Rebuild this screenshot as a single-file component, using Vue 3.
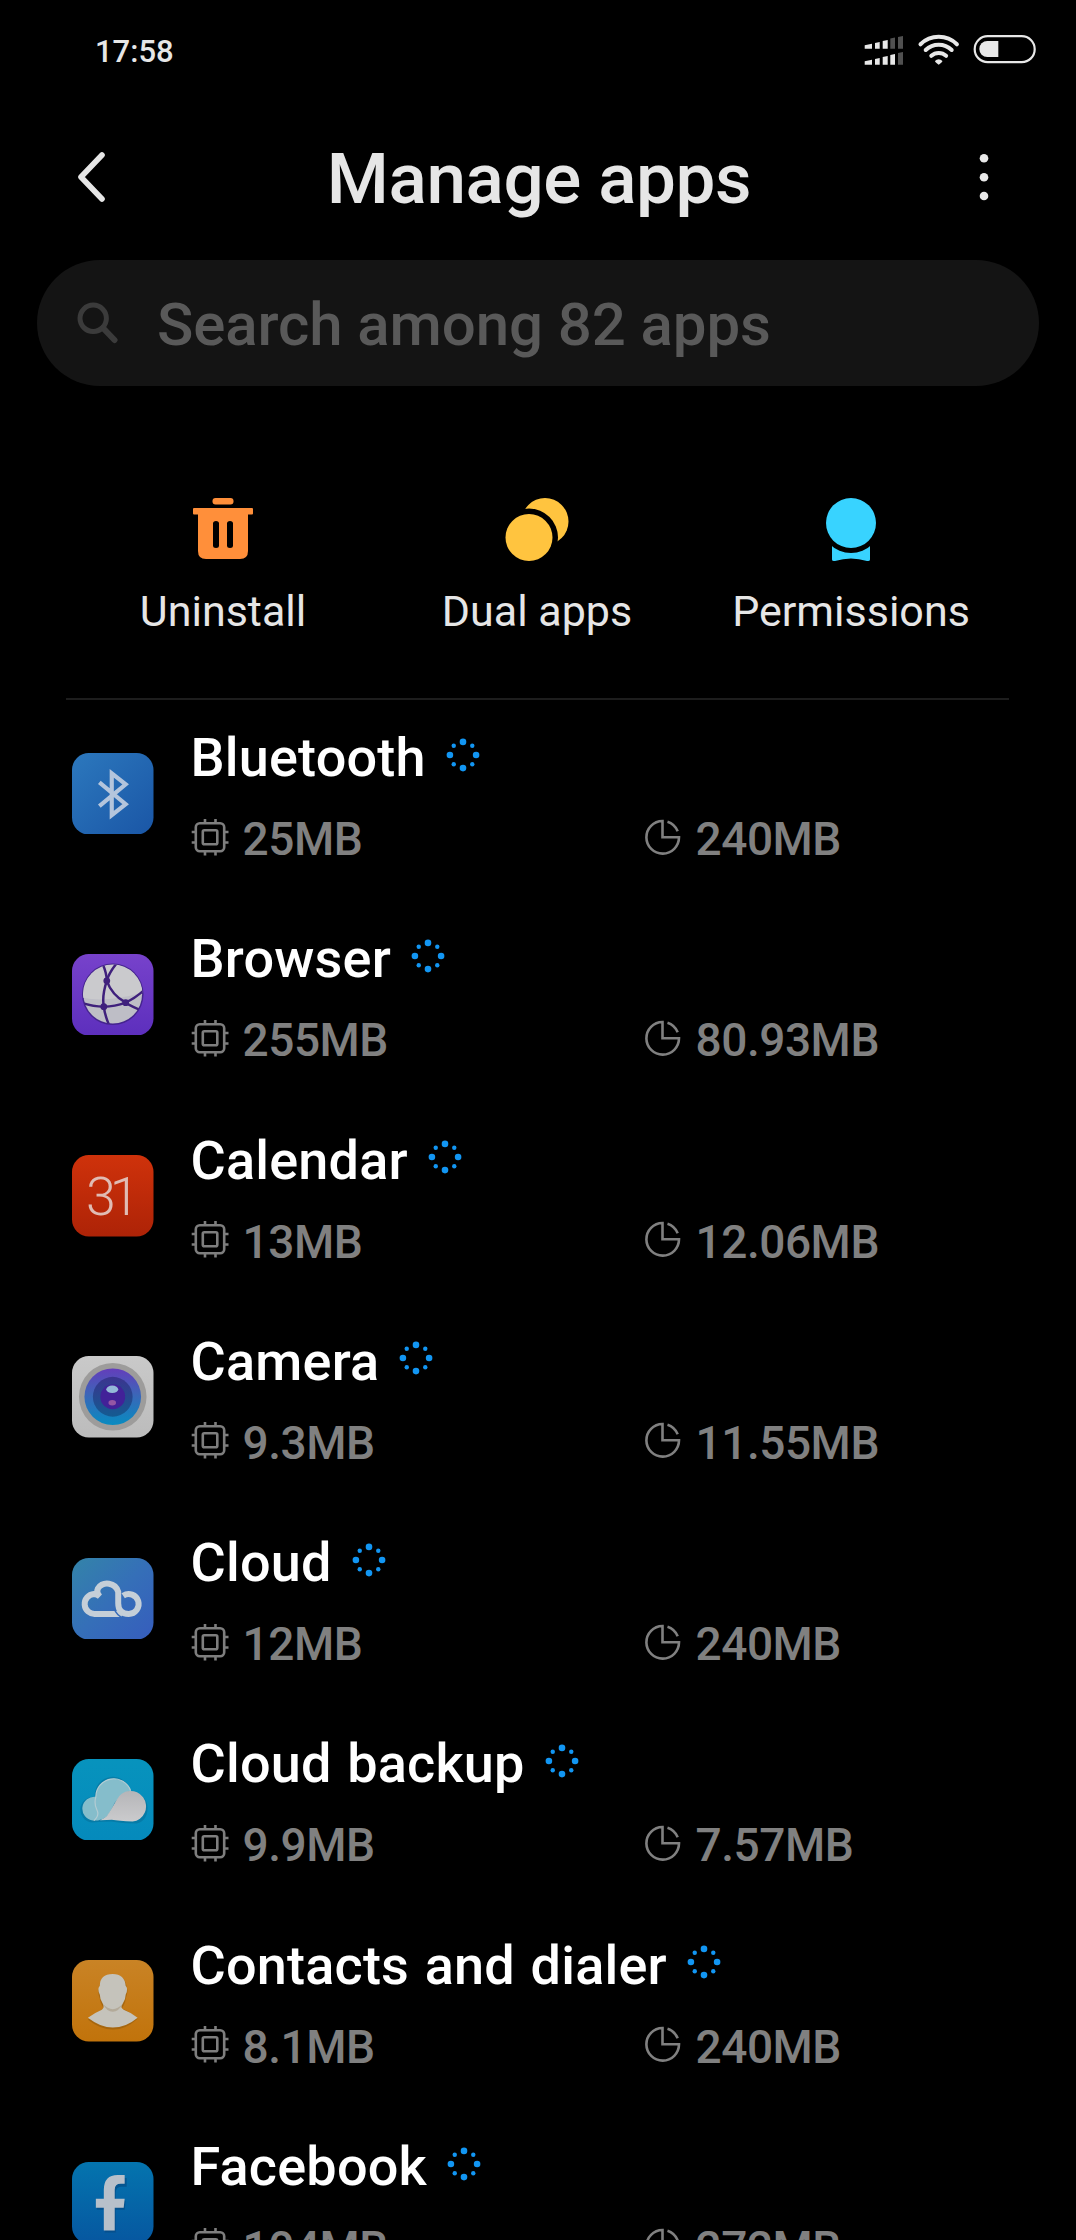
<script setup>
const actions = [
  { id: "uninstall", label: "Uninstall" },
  { id: "dual", label: "Dual apps" },
  { id: "permissions", label: "Permissions" },
];

const apps = [
  { id: "bluetooth", name: "Bluetooth", memory: "25MB", storage: "240MB" },
  { id: "browser", name: "Browser", memory: "255MB", storage: "80.93MB" },
  { id: "calendar", name: "Calendar", memory: "13MB", storage: "12.06MB" },
  { id: "camera", name: "Camera", memory: "9.3MB", storage: "11.55MB" },
  { id: "cloud", name: "Cloud", memory: "12MB", storage: "240MB" },
  { id: "backup", name: "Cloud backup", memory: "9.9MB", storage: "7.57MB" },
  { id: "contacts", name: "Contacts and dialer", memory: "8.1MB", storage: "240MB" },
  { id: "facebook", name: "Facebook", memory: "104MB", storage: "272MB" },
];

// loading spinner: big dots on the axes, small ones on the diagonals
const spinnerDots = Array.from({ length: 8 }, (_, i) => ({
  x: 17 + 13.1 * Math.cos((i * Math.PI) / 4),
  y: 17 + 13.1 * Math.sin((i * Math.PI) / 4),
  r: i % 2 ? 2.2 : 3.3,
}));
</script>

<template>
  <div class="screen">
    <div class="status-bar">
      <span class="clock">17:58</span>
      <svg class="status-icons" viewBox="0 0 172 30" fill="#e8e8e8">
        <path d="M.7 11.3 8 9.7v5H.7zM11 9l4.7-1v6.7H11zM18.7 7l5-1v8.7h-5zM.7 27.3 8 25.7v5H.7zM11 25l4.7-1v6.7H11zM18.7 23l5-1v8.7h-5zM26.3 21l4.7-1v10.7h-4.7z" />
        <path fill="#505050" d="M26.3 4.5 31 3.5v11.2h-4.7zM34 3l5-1v12.7h-5zM34 19l5-1v12.7h-5z" />
        <g fill="none" stroke="#e8e8e8" stroke-width="4" stroke-linecap="round">
          <path d="M56.5 10.3a26 26 0 0 1 36.4 0" />
          <path d="M61.7 16a18.5 18.5 0 0 1 26 0" />
          <path d="M67.3 21.8a11 11 0 0 1 14.8 0" />
        </g>
        <path d="M71 27a5 5 0 0 1 7.4 0q0 1.2-3.7 3.8Q71 28.2 71 27z" />
        <rect x="110.7" y="2.2" width="60" height="26" rx="13" fill="none" stroke="#e8e8e8" stroke-width="2.2" />
        <path d="M134.3 7v16h-11a8 8 0 0 1 0-16z" />
      </svg>
    </div>

    <header class="title-bar">
      <svg class="back" viewBox="0 0 30 50">
        <path d="M25 3 4 25l21 22" fill="none" stroke="#e6e6e6" stroke-width="5.6" stroke-linecap="round" stroke-linejoin="round" />
      </svg>
      <h1 class="title">Manage apps</h1>
      <svg class="more" viewBox="0 0 10 48" fill="#e8e8e8">
        <circle cx="5" cy="5.3" r="4.3" />
        <circle cx="5" cy="24.2" r="4.3" />
        <circle cx="5" cy="43" r="4.3" />
      </svg>
    </header>

    <div class="search">
      <svg class="search-icon" viewBox="0 0 42 42" fill="none" stroke="#3b3b3b" stroke-width="5">
        <circle cx="16.2" cy="16.3" r="13.2" />
        <path d="m26 26 11.5 12" stroke-width="6" stroke-linecap="round" />
      </svg>
      <span class="search-text">Search among 82 apps</span>
    </div>

    <nav class="actions">
      <button v-for="action in actions" :key="action.id" class="action">
        <svg class="action-icon" viewBox="0 0 64 64">
          <g v-if="action.id === 'uninstall'" fill="#ff8f3a">
            <rect x="21.5" y="0" width="21" height="6.6" rx="3" />
            <path fill-rule="evenodd" d="M3 10h58q1 0 1 1v4.500q0 1-1 1h-4V53q0 8-8 8H15q-8 0-8-8V16.500H3q-1 0-1-1V11q0-1 1-1zM25 23q-3 0-3 2.500v22q0 2.500 3 2.500t3-2.500v-22q0-2.500-3-2.500zM39 23q-3 0-3 2.500v22q0 2.500 3 2.500t3-2.500v-22q0-2.500-3-2.500z" />
          </g>
          <g v-else-if="action.id === 'dual'" fill="#ffc43f">
            <circle cx="40" cy="23.5" r="23.5" />
            <circle cx="24" cy="39.5" r="29" fill="#000" />
            <circle cx="24" cy="39.5" r="23.5" />
          </g>
          <g v-else fill="#38d3ff">
            <path d="M13 46h38v15.500q0 2-3 1.500-16-5-32 0-3 .5-3-1.500z" />
            <circle cx="32" cy="25" r="30" fill="#000" />
            <circle cx="32" cy="25" r="25" />
          </g>
        </svg>
        <span class="action-label">{{ action.label }}</span>
      </button>
    </nav>

    <main class="list">
      <section v-for="app in apps" :key="app.id" class="app">
        <svg class="app-icon" viewBox="0 0 82 82">
          <defs>
            <linearGradient id="g-bluetooth" x1="0" y1="0" x2="1" y2="1"><stop stop-color="#2c78bd" /><stop offset="1" stop-color="#1a56a6" /></linearGradient>
            <linearGradient id="g-browser" x2="0" y2="1"><stop stop-color="#7742cb" /><stop offset="1" stop-color="#5d2fbd" /></linearGradient>
            <linearGradient id="g-calendar" x2="0" y2="1"><stop stop-color="#cf320b" /><stop offset="1" stop-color="#ad2307" /></linearGradient>
            <linearGradient id="g-camera" x2="0" y2="1"><stop stop-color="#c9c9c9" /><stop offset="1" stop-color="#bcbcbc" /></linearGradient>
            <linearGradient id="g-cloud" x1="0" y1="0" x2="1" y2="1"><stop stop-color="#3384a9" /><stop offset=".5" stop-color="#356fb8" /><stop offset="1" stop-color="#365dbd" /></linearGradient>
            <linearGradient id="g-backup" x2="0" y2="1"><stop stop-color="#0793bd" /><stop offset="1" stop-color="#058abc" /></linearGradient>
            <linearGradient id="g-contacts" x2="0" y2="1"><stop stop-color="#c98325" /><stop offset="1" stop-color="#c1730b" /></linearGradient>
            <linearGradient id="g-facebook" x2="0" y2="1"><stop stop-color="#0474ae" /><stop offset="1" stop-color="#0657a0" /></linearGradient>
            <linearGradient id="lens" x2="0" y2="1"><stop stop-color="#643dbb" /><stop offset=".45" stop-color="#3d65b8" /><stop offset="1" stop-color="#078bc0" /></linearGradient>
            <linearGradient id="lens-inner" x2="0" y2="1"><stop stop-color="#3b348f" /><stop offset="1" stop-color="#145b91" /></linearGradient>
            <linearGradient id="puff" x2="0" y2="1"><stop stop-color="#b5b5b8" /><stop offset="1" stop-color="#cbcbcd" /></linearGradient>
            <clipPath id="globe"><circle cx="41" cy="40.5" r="30" /></clipPath>
          </defs>
          <rect width="82" height="82" rx="17" :fill="`url(#g-${app.id})`" />

          <path v-if="app.id === 'bluetooth'" d="m27.500 29.500 26.500 22-14 11V20.500l14 11-26.500 22" fill="none" stroke="#b4c5dc" stroke-width="4.2" />

          <g v-else-if="app.id === 'browser'">
            <circle cx="41" cy="40.5" r="31" fill="#45248f" />
            <circle cx="41" cy="40.5" r="29.5" fill="#bebec6" />
            <g clip-path="url(#globe)">
              <path d="M11 44q23 5 60-5V10H11z" fill="#cacacd" />
              <g fill="none" stroke="#3f207c" stroke-width="2.5">
                <path d="M30 8q5 11 5 19-5 15-3 26 1 9 6 20" />
                <path d="M46 8q-9 11-11 19 5 14 19 22 6 4 19 9" />
                <path d="M9 49q12 4 23 4 11 0 22-4 12-6 20-14" />
              </g>
              <g fill="#3f207c">
                <circle cx="35" cy="27" r="3.4" />
                <circle cx="32" cy="53" r="3.4" />
                <circle cx="54" cy="49" r="3.4" />
              </g>
            </g>
          </g>

          <text v-else-if="app.id === 'calendar'" class="calendar-day" x="38" y="60.5">31</text>

          <g v-else-if="app.id === 'camera'">
            <circle cx="41" cy="41" r="34" fill="#9d9c9b" />
            <circle cx="41" cy="41" r="28.5" fill="url(#lens)" />
            <circle cx="41" cy="41" r="20" fill="url(#lens-inner)" />
            <circle cx="41" cy="41" r="12.5" fill="#422198" />
            <ellipse cx="40.5" cy="33.5" rx="6" ry="3.7" fill="#94b9d8" />
            <ellipse cx="40.5" cy="47" rx="3.8" ry="2.8" fill="#9456a4" />
          </g>

          <!-- left lobe first, then the dark seam, then the loop that crosses over it -->
          <g v-else-if="app.id === 'cloud'" fill="none" stroke="#c5cfd8" stroke-width="6">
            <path d="M50 56.300H23.500a9.800 9.800 0 0 1-1.500-20q3 0 6 2.500-4-4-2-8A11.500 11.500 0 0 1 46.500 34v11.500q0 10.800 10.500 10.800a10 10 0 1 0-5.500-18.300" />
            <path d="M42.500 51.500q2.500 5.500 8 8.500" stroke="#356bb9" stroke-width="1.5" />
          </g>

          <g v-else-if="app.id === 'backup'">
            <path d="M20 64q14-1 20-1 10 2 25 2 11-3 11-16a15 15 0 0 0-17-15 18 18 0 0 0-36 4 13 13 0 0 0-3 26z" fill="#07678d" opacity=".45" />
            <path d="M21 62a12 12 0 1 1 3-24 18 18 0 0 1 35-6q-14 5-19 18-4 10-14 12z" fill="#85bdcb" />
            <path d="M24 38q-2 7 1 13t-3 11M24 38a18 18 0 0 1 35-6" fill="none" stroke="#b4ccd3" stroke-width="1.2" />
            <path d="M24 62q9 0 14-9l7-12a15.500 15.500 0 1 1 16 22Q47 62 40 61z" fill="url(#puff)" />
          </g>

          <g v-else-if="app.id === 'contacts'">
            <path d="M16 60q10-8 16-11-4-7-4-10-3-8 0-11 0-13 14-13 12 0 13 13 2 3-1 11 0 4-4 10 7 2 16 10-12 11-25 11-12 0-25-10z" fill="#955b0b" opacity=".6" />
            <path d="M16 58q7-5 14-8 3-2 1-6-3-4-3-9-3-6 0-9 0-12 13-12 12 0 13 12 3 3 0 9 0 5-3 9-3 4 1 6 8 3 14 8-12 10-25 10-12 0-25-10z" fill="#c5c3bb" />
            <path d="M31 44q10 11 20 0-4 8-10 8t-10-8z" fill="#b3aa99" />
          </g>

          <g v-else>
            <path d="M33 71V48h-8v-9h8v-8q0-15 14-15h8v9h-5q-6 0-6 6v8h10l-1 9h-9v23z" fill="#05467c" opacity=".55" />
            <path d="M32 69V46h-8v-9h8v-9q0-15 14-15h7v9h-4q-6 0-6 6v9h10l-1 9h-9v23z" fill="#b7c0ca" />
          </g>
        </svg>

        <div class="app-info">
          <div class="app-heading">
            <h2 class="app-name">{{ app.name }}</h2>
            <svg class="spinner" viewBox="0 0 34 34" fill="#1296f3">
              <circle v-for="(dot, i) in spinnerDots" :key="i" :cx="dot.x" :cy="dot.y" :r="dot.r" />
            </svg>
          </div>
          <div class="app-usage">
            <div class="usage">
              <svg class="usage-icon" viewBox="0 0 38 38" fill="none" stroke="#7e7e7e" stroke-width="2.6">
                <rect x="4.8" y="5.3" width="28.4" height="28" rx="4" />
                <rect x="11.8" y="12.3" width="14.5" height="14" rx="1.5" />
                <path d="M14 1v4M24.500 1v4M14 33.500v4M24.500 33.500v4M.7 14h4M.7 24.500h4M33.500 14h4M33.500 24.500h4" />
              </svg>
              <span>{{ app.memory }}</span>
            </div>
            <div class="usage">
              <svg class="usage-icon" viewBox="0 0 38 38" fill="none" stroke="#808080" stroke-width="2.6">
                <path d="M18.500 3A16.300 16.300 0 1 0 35 19.300H18.500z" />
                <path d="M23.500 3.800Q30.500 6 33.700 13.300" />
              </svg>
              <span>{{ app.storage }}</span>
            </div>
          </div>
        </div>
      </section>
    </main>
  </div>
</template>

<style>
body {
  background: #000;
}
</style>

<style scoped>
.screen {
  display: flex;
  flex-direction: column;
  box-sizing: border-box;
  width: 1076px;
  height: 2240px;
  overflow: hidden;
  background: #000;
  color: #e6e6e6;
  font-family: Roboto, sans-serif;
}

.status-bar {
  display: flex;
  flex: none;
  align-items: flex-start;
  justify-content: space-between;
  height: 102px;
  box-sizing: border-box;
  padding: 34px 40px 0 95px;
}

.clock {
  font-size: 31px;
  font-weight: 500;
  line-height: 35px;
}

.status-icons {
  width: 172px;
  height: 30px;
  overflow: visible;
}

.title-bar {
  display: flex;
  flex: none;
  align-items: center;
  justify-content: space-between;
  height: 150px;
  padding: 0 87px 0 77px;
}

.back {
  width: 30px;
  height: 50px;
}

.title {
  margin: 4px 8px 0 0;
  font-size: 71px;
  font-weight: 500;
  letter-spacing: -0.4px;
  line-height: 84px;
}

.more {
  width: 10px;
  height: 48px;
}

.search {
  display: flex;
  flex: none;
  align-items: center;
  gap: 38px;
  height: 126px;
  margin: 8px 37px 0;
  padding-left: 40px;
  border-radius: 63px;
  background: #141414;
}

.search-icon {
  width: 42px;
  height: 42px;
}

.search-text {
  padding-top: 4px;
  color: #595959;
  font-size: 60px;
  font-weight: 500;
  letter-spacing: -0.1px;
  line-height: 72px;
}

.actions {
  display: grid;
  flex: none;
  grid-template-columns: repeat(3, 314px);
  justify-content: center;
  height: 314px;
  box-sizing: border-box;
  margin: 0 67px 0 66px;
  padding: 112px 1px 0 0;
  border-bottom: 2px solid #1d1d1d;
}

.action {
  display: flex;
  flex-direction: column;
  align-items: center;
  gap: 24px;
  padding: 0;
  border: none;
  background: none;
  color: inherit;
  font: inherit;
}

.action-icon {
  width: 64px;
  height: 64px;
}

.action-label {
  font-size: 43px;
  line-height: 50px;
}

.list {
  padding: 23px 0 0 72px;
}

.app {
  display: flex;
  gap: 37px;
  height: 201.3px;
}

.app-icon {
  flex: none;
  width: 81.5px;
  height: 81.5px;
  margin-top: 29.5px;
}

.calendar-day {
  fill: #e0bcb4;
  font-size: 54px;
  font-weight: 300;
  letter-spacing: -6px;
  text-anchor: middle;
}

.app-info {
  padding-top: 2px;
}

.app-heading {
  display: flex;
  align-items: center;
  gap: 20px;
}

.app-name {
  margin: 0;
  color: #fff;
  font-size: 54px;
  font-weight: 500;
  letter-spacing: 0.2px;
  line-height: 66px;
  word-spacing: 2px;
}

.spinner {
  width: 34px;
  height: 34px;
  margin-bottom: 7px;
}

.app-usage {
  display: grid;
  grid-template-columns: 453px 300px;
  margin-top: 21px;
}

.usage {
  display: flex;
  align-items: center;
  gap: 14px;
  color: #808080;
  font-size: 46px;
  font-weight: 500;
  letter-spacing: -0.45px;
  line-height: 54px;
}

.usage-icon {
  width: 38px;
  height: 38px;
  margin-bottom: 5px;
}
</style>
